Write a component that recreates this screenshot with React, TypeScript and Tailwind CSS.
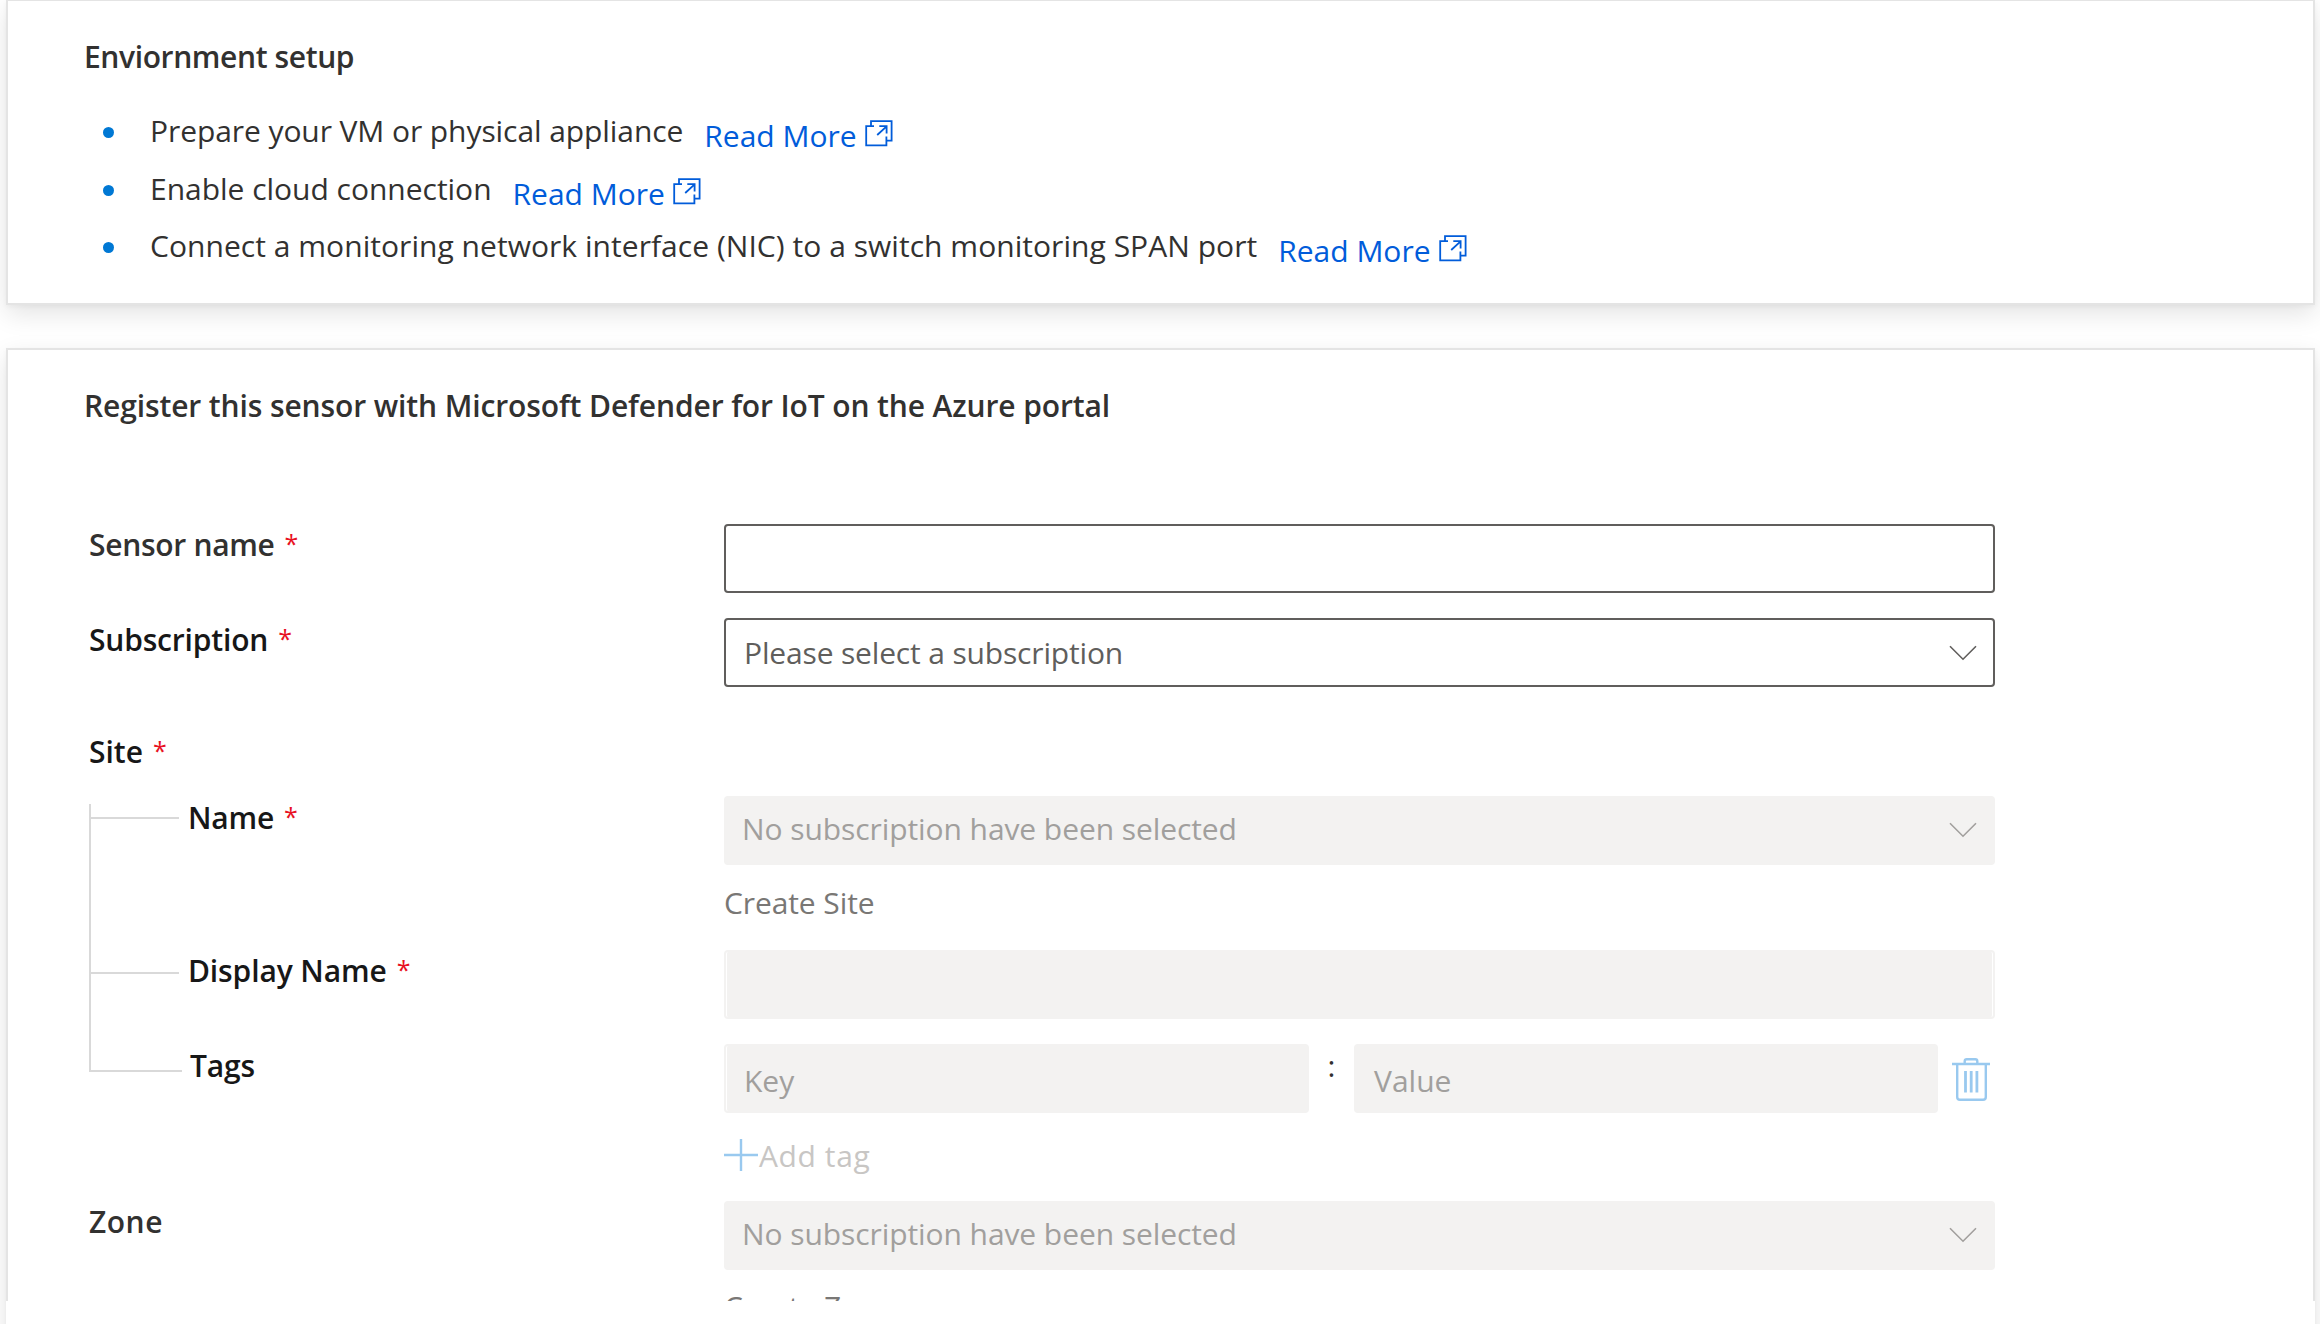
import type { ReactNode } from "react";

function OpenIcon() {
  return (
    <svg width="28" height="27" viewBox="0 0 28 27" fill="none" stroke="currentColor" strokeWidth="1.8" className="mt-[5px] ml-[8px] shrink-0">
      <path d="M6 6V1.2H26.6V20.6H21.4M9 6.2H1.2V25.4H21.4V16.5" />
      <path d="M12.2 15L21.6 6.3M14.3 6.2H21.6V13.6" />
    </svg>
  );
}

function Chevron() {
  return (
    <svg width="28" height="16" viewBox="0 0 28 16" fill="none" stroke="currentColor" strokeWidth="1.6" className="mr-[16px] shrink-0">
      <path d="M1 1.2L14 14.2L27 1.2" />
    </svg>
  );
}

function TrashIcon() {
  return (
    <svg width="38" height="44" viewBox="0 0 38 44" fill="none" stroke="#99c9ef" strokeWidth="2.4" className="mt-[14px] ml-[14px] shrink-0">
      <path d="M0 6H38M12.7 5.5V3.2Q12.7 1.2 14.7 1.2H23.3Q25.3 1.2 25.3 3.2V5.5" />
      <path d="M5.2 6V39Q5.2 41.8 8 41.8H31Q33.8 41.8 33.8 39V6" />
      <path d="M13.5 13V34.5M19.2 13V34.5M24.9 13V34.5" strokeWidth="2.8" />
    </svg>
  );
}

function Step({ text, spacing }: { text: string; spacing: string }) {
  return (
    <li className="flex h-[57.5px] items-start text-[#323130]">
      <span className="mt-[17px] mr-[36px] size-[11px] shrink-0 rounded-full bg-[#0078d4]" />
      <span className={spacing}>{text}</span>
      <a className="mt-[5px] ml-[21px] flex text-[#015cda]">
        Read More
        <OpenIcon />
      </a>
    </li>
  );
}

function Label({ children, required, className = "" }: { children: ReactNode; required?: boolean; className?: string }) {
  return (
    <div className={`flex shrink-0 font-semibold ${className}`}>
      {children}
      {required && <span className="relative -top-[2px] ml-[10px] text-[25px] font-normal text-[#e81123]">*</span>}
    </div>
  );
}

const disabledBox = "h-[69px] rounded-[4px] bg-[#f3f2f1] text-[#a19f9d]";

function Select({ text, disabled }: { text: string; disabled?: boolean }) {
  return disabled ? (
    <div className={`${disabledBox} flex w-[1271px] items-center justify-between pr-[2px] pb-[2px] pl-[18px]`}>
      <span className="relative -top-px tracking-[-0.08px]">{text}</span>
      <Chevron />
    </div>
  ) : (
    <div className="flex h-[69px] w-[1271px] items-center justify-between rounded-[4px] border-2 border-[#605e5c] pl-[18px] text-[#605e5c]">
      <span className="tracking-[-0.16px]">{text}</span>
      <Chevron />
    </div>
  );
}

export default function App() {
  return (
    <div className="flex h-[1324px] w-[2320px] flex-col overflow-hidden bg-white pr-[5px] pl-[6px] font-['Open_Sans',sans-serif] text-[30px] leading-[42px] whitespace-nowrap">
      <section className="h-[305px] shrink-0 border-2 border-t border-[#e4e4e4] bg-white pt-[35px] pl-[76px] shadow-[0_9px_24px_rgba(0,0,0,0.11),0_2px_5px_rgba(0,0,0,0.04)]">
        <h2 className="font-semibold tracking-[-0.38px] text-[#323130]">Enviornment setup</h2>
        <ul className="mt-[32px] pl-[19px]">
          <Step text="Prepare your VM or physical appliance" spacing="tracking-[-0.08px]" />
          <Step text="Enable cloud connection" spacing="tracking-[-0.02px]" />
          <Step text="Connect a monitoring network interface (NIC) to a switch monitoring SPAN port" spacing="tracking-[0.04px]" />
        </ul>
      </section>

      <section className="relative mt-[43px] flex h-[1100px] shrink-0 flex-col border-2 border-[#e4e4e4] bg-white shadow-[0_9px_24px_rgba(0,0,0,0.11),0_2px_5px_rgba(0,0,0,0.04)]">
        <div className="h-[951px] shrink-0 overflow-hidden pt-[35px] pl-[76px] text-[#171717]">
          <h2 className="h-[139px] tracking-[-0.12px] font-semibold text-[#323130]">
            Register this sensor with Microsoft Defender for IoT on the Azure portal
          </h2>

          <div className="pl-[5px]">
            <div className="flex h-[94px]">
              <Label required className="w-[635px] tracking-[-0.3px] text-[#323130]">Sensor name</Label>
              <div className="h-[69px] w-[1271px] rounded-[4px] border-2 border-[#605e5c]" />
            </div>

            <div className="flex h-[113px]">
              <Label required className="w-[635px] pt-px tracking-[-0.18px]">Subscription</Label>
              <Select text="Please select a subscription" />
            </div>

            <Label required className="h-[65px]">Site</Label>

            <div className="flex h-[405px]">
              <div className="w-[98px] shrink-0 pt-[8px]">
                <div className="h-[15px] w-[90px] border-b-2 border-l-2 border-[#d9d9d9]" />
                <div className="h-[155px] w-[90px] border-b-2 border-l-2 border-[#d9d9d9]" />
                <div className="h-[98px] w-[93px] border-b-2 border-l-2 border-[#d9d9d9]" />
              </div>

              <div>
                <div className="flex h-[154px]">
                  <Label required className="w-[537px] pt-px pl-px tracking-[-0.2px]">Name</Label>
                  <div>
                    <Select disabled text="No subscription have been selected" />
                    <div className="mt-[17px] tracking-[-0.1px] text-[#797775]">Create Site</div>
                  </div>
                </div>

                <div className="flex h-[94px]">
                  <Label required className="w-[537px] pl-px tracking-[-0.12px]">Display Name</Label>
                  <div className={`${disabledBox} w-[1271px] p-[2px]`}>
                    <div className="h-full rounded-[2px] border-x border-white" />
                  </div>
                </div>

                <div className="flex h-[157px]">
                  <Label className="w-[537px] pt-px pl-[3px] tracking-[-0.2px]">Tags</Label>
                  <div>
                    <div className="flex h-[69px]">
                      <div className={`${disabledBox} w-[585px] p-[2px]`}>
                        <div className="h-full rounded-[2px] border-l border-white pt-[14px] pl-[17px]">Key</div>
                      </div>
                      <span className="w-[45px] pt-px text-center text-[#323130]">:</span>
                      <div className={`${disabledBox} w-[584px] pt-[16px] pl-[20px]`}>Value</div>
                      <TrashIcon />
                    </div>
                    <div className="mt-[22px] flex tracking-[0.6px] text-[#c8c6c4]">
                      <svg width="34" height="34" viewBox="0 0 34 34" fill="none" stroke="#99c9ef" strokeWidth="2.4" className="mt-[3px] mr-px shrink-0">
                        <path d="M0 17H34M17 1V33" />
                      </svg>
                      Add tag
                    </div>
                  </div>
                </div>
              </div>
            </div>

            <div className="flex">
              <Label className="w-[635px] tracking-[0.5px] text-[#323130]">Zone</Label>
              <div>
                <Select disabled text="No subscription have been selected" />
                <div className="mt-[16px] text-[#797775]">Create Zone</div>
              </div>
            </div>
          </div>
        </div>
        <div className="relative -mx-[2px] grow bg-white" />
      </section>
    </div>
  );
}
